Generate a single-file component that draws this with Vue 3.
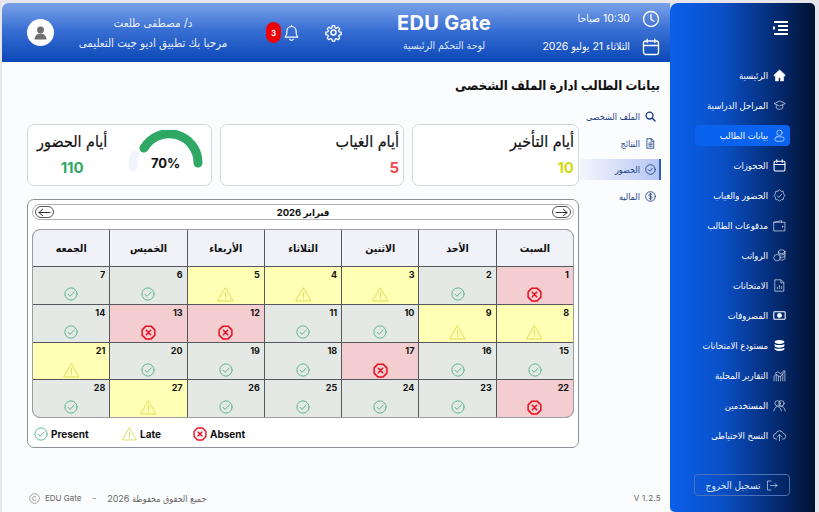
<script setup>
import { ref } from 'vue'

// sidebar entries, top to bottom
const menu = ref([
  { label: 'الرئيسية', icon: 'home' },
  { label: 'المراحل الدراسية', icon: 'cap' },
  { label: 'بيانات الطالب', icon: 'user', active: true },
  { label: 'الحجوزات', icon: 'calendar' },
  { label: 'الحضور والغياب', icon: 'shield' },
  { label: 'مدفوعات الطالب', icon: 'wallet' },
  { label: 'الرواتب', icon: 'coins' },
  { label: 'الامتحانات', icon: 'file' },
  { label: 'المصروفات', icon: 'cash' },
  { label: 'مستودع الامتحانات', icon: 'db' },
  { label: 'التقارير المحلية', icon: 'chart' },
  { label: 'المستخدمين', icon: 'users' },
  { label: 'النسخ الاحتياطى', icon: 'cloud' }
])

const tabs = ref([
  { label: 'الملف الشخصى', icon: 'search' },
  { label: 'النتائج', icon: 'doc' },
  { label: 'الحضور', icon: 'check', active: true },
  { label: 'الماليه', icon: 'dollar' }
])

const weekDays = ['السبت', 'الأحد', 'الاثنين', 'الثلاثاء', 'الأربعاء', 'الخميس', 'الجمعه']

// p = present, l = late, a = absent
const days = ref(
  'a p l l l p p l l p p a a p p p a p p p l a p p p p l p'.split(' ').map((s, i) => ({ n: i + 1, s }))
)
</script>

<template>
  <div class="page">
    <div class="main">
      <header class="top">
        <div class="avatar">
          <svg width="15" height="15" viewBox="0 0 24 24" fill="#6f6f6f"><circle cx="12" cy="8" r="5.500" /><path d="M2.500 23c0-6 4-9 9.500-9s9.500 3 9.500 9z" /></svg>
        </div>
        <div class="hello">
          <div>د/ مصطفى طلعت</div>
          <div>مرحبا بك تطبيق اديو جيت التعليمى</div>
        </div>
        <div class="notify">
          <span class="badge">3</span>
          <svg width="17" height="19" viewBox="0 0 24 24" fill="none" stroke="#fff" stroke-width="1.700" stroke-linejoin="round" stroke-linecap="round"><path d="M3 18.500h18c-1.800-1.800-2.500-3.500-2.500-6.500v-2a6.500 6.500 0 0 0-13 0v2c0 3-.7 4.700-2.500 6.500z" /><path d="M9.500 21.500c.6 1 1.500 1.500 2.500 1.500s1.900-.5 2.500-1.500M12 2v1.500" /></svg>
        </div>
        <svg class="gear" width="19" height="19" viewBox="0 0 24 24" fill="none" stroke="#fff" stroke-width="1.800" stroke-linejoin="round"><circle cx="12" cy="12" r="3.200" /><path d="M10.300 2.500h3.400l.6 2.900 1.600.7 2.500-1.600 2.400 2.400-1.600 2.500.7 1.600 2.900.6v3.400l-2.900.6-.7 1.600 1.600 2.500-2.400 2.400-2.500-1.600-1.600.7-.6 2.900h-3.400l-.6-2.900-1.600-.7-2.500 1.600-2.400-2.400 1.600-2.500-.7-1.600-2.900-.6v-3.400l2.900-.6.7-1.600-1.600-2.500 2.400-2.400 2.500 1.600 1.600-.7z" transform="translate(1.200 1.200) scale(.9)" /></svg>
        <div class="brand">
          <div class="brand-name">EDU Gate</div>
          <div class="brand-sub">لوحة التحكم الرئيسية</div>
        </div>
        <div class="when">
          <div class="when-row">
            <span>10:30 صباحا</span>
            <svg width="18" height="18" viewBox="0 0 24 24" fill="none" stroke="#fff" stroke-width="1.800" stroke-linecap="round" stroke-linejoin="round"><circle cx="12" cy="12" r="10" /><path d="M12 6v6.500l4 2.500" /></svg>
          </div>
          <div class="when-row">
            <span>الثلاثاء 21 يوليو 2026</span>
            <svg width="18" height="18" viewBox="0 0 24 24" fill="none" stroke="#fff" stroke-width="1.800" stroke-linecap="round" stroke-linejoin="round"><rect x="2" y="4" width="20" height="18" rx="3" /><path d="M2 10h20M7 1.500V6M17 1.500V6" /></svg>
          </div>
        </div>
      </header>

      <section class="content">
        <h1 class="title">بيانات الطالب ادارة الملف الشخصى</h1>

        <div class="body">
          <div class="left">
            <div class="cards">
              <div class="card card-gauge">
                <div class="stat">
                  <div class="stat-title">أيام الحضور</div>
                  <div class="stat-num green">110</div>
                </div>
                <div class="gauge">
                  <svg width="86" height="50" viewBox="0 0 86 50" fill="none" stroke-width="9" stroke-linecap="round">
                    <path d="M9 37Q9 30 11 25" stroke="#f1f5fb" />
                    <path d="M20 18A29 29 0 0 1 74 33" stroke="#2fa866" />
                  </svg>
                  <span class="gauge-num">70%</span>
                </div>
              </div>
              <div class="card">
                <div class="stat-title">أيام الغياب</div>
                <div class="stat-num red">5</div>
              </div>
              <div class="card">
                <div class="stat-title">أيام التأخير</div>
                <div class="stat-num yellow">10</div>
              </div>
            </div>

            <div class="calendar">
              <div class="month">
                <span class="arrow">
                  <svg width="13" height="9" viewBox="0 0 14 9" fill="none" stroke="#222" stroke-width="1" stroke-linecap="round" stroke-linejoin="round"><path d="M13 4.500H1M5 1L1 4.500 5 8" /></svg>
                </span>
                <span class="month-name">فبراير 2026</span>
                <span class="arrow">
                  <svg width="13" height="9" viewBox="0 0 14 9" fill="none" stroke="#222" stroke-width="1" stroke-linecap="round" stroke-linejoin="round"><path d="M1 4.500h12M9 1l4 3.500L9 8" /></svg>
                </span>
              </div>

              <div class="grid">
                <div v-for="d in weekDays" :key="d" class="head">{{ d }}</div>
                <div v-for="d in days" :key="d.n" class="day" :class="d.s">
                  <span class="num">{{ d.n }}</span>
                  <span class="mark">
                    <svg v-if="d.s === 'p'" width="14" height="14" viewBox="0 0 24 24" fill="none" stroke="#4dae8b" stroke-width="1.500" stroke-linecap="round" stroke-linejoin="round"><circle cx="12" cy="12" r="10.500" /><path d="M7 12.500l3.500 3.500L17.500 8.500" /></svg>
                    <svg v-else-if="d.s === 'l'" width="17" height="15" viewBox="0 0 24 22" fill="none" stroke="#d9d94a" stroke-width="1.300" stroke-linecap="round" stroke-linejoin="round"><path d="M12 1.500L23 20.500H1z" /><path d="M12 8v6.500M12 17v.4" /></svg>
                    <svg v-else width="15" height="15" viewBox="0 0 24 24" fill="none" stroke="#ea0f1e" stroke-width="2.400" stroke-linecap="round" stroke-linejoin="round"><path d="M7.800 1.800h8.400l6 6v8.400l-6 6H7.800l-6-6V7.800z" /><path d="M8.500 8.500l7 7M15.500 8.500l-7 7" /></svg>
                  </span>
                </div>
              </div>

              <div class="legend">
                <div class="legend-item w1">
                  <svg width="14" height="14" viewBox="0 0 24 24" fill="none" stroke="#4dae8b" stroke-width="1.500" stroke-linecap="round" stroke-linejoin="round"><circle cx="12" cy="12" r="10.500" /><path d="M7 12.500l3.500 3.500L17.500 8.500" /></svg>
                  <span>Present</span>
                </div>
                <div class="legend-item w2">
                  <svg width="15" height="14" viewBox="0 0 24 22" fill="none" stroke="#d9d94a" stroke-width="1.400" stroke-linecap="round" stroke-linejoin="round"><path d="M12 1.500L23 20.500H1z" /><path d="M12 8v6.500M12 17v.4" /></svg>
                  <span>Late</span>
                </div>
                <div class="legend-item">
                  <svg width="14" height="14" viewBox="0 0 24 24" fill="none" stroke="#ea0f1e" stroke-width="2.400" stroke-linecap="round" stroke-linejoin="round"><path d="M7.800 1.800h8.400l6 6v8.400l-6 6H7.800l-6-6V7.800z" /><path d="M8.500 8.500l7 7M15.500 8.500l-7 7" /></svg>
                  <span>Absent</span>
                </div>
              </div>
            </div>
          </div>

          <nav class="tabs">
            <div v-for="t in tabs" :key="t.label" class="tab" :class="{ on: t.active }">
              <svg width="11" height="11" viewBox="0 0 24 24" fill="none" stroke="#1d3f7e" stroke-width="1.800" stroke-linecap="round" stroke-linejoin="round">
                <template v-if="t.icon === 'search'"><circle cx="10" cy="10" r="7.500" stroke-width="3" /><path d="M16 16l6 6" stroke-width="3" /></template>
                <template v-else-if="t.icon === 'doc'"><path d="M5 1.500h9l5 5v16H5z" /><path d="M8.500 11h7M8.500 14.500h7M8.500 18h7M13.500 2v5h5" /></template>
                <template v-else-if="t.icon === 'check'"><circle cx="12" cy="12" r="10.500" /><path d="M7.500 12.500l3 3 6-6.500" /></template>
                <template v-else><circle cx="12" cy="12" r="10.500" /><path d="M15.500 8.500c-.7-1.200-2-1.800-3.500-1.800-2 0-3.500 1-3.500 2.600 0 3.600 7.200 1.700 7.200 5.400 0 1.600-1.600 2.600-3.700 2.600-1.600 0-3-.7-3.700-1.900M12 4.500v15" /></template>
              </svg>
              <span>{{ t.label }}</span>
            </div>
          </nav>
        </div>

        <footer class="foot">
          <div class="copy">
            <svg width="11" height="11" viewBox="0 0 24 24" fill="none" stroke="#777" stroke-width="1.500"><circle cx="12" cy="12" r="10.500" /><path d="M15.500 9a4.500 4.500 0 1 0 0 6" /></svg>
            <span class="copy-name">EDU Gate</span>
            <span class="copy-dash">-</span>
            <span class="ar">جميع الحقوق محفوظة 2026</span>
          </div>
          <span class="version">V 1.2.5</span>
        </footer>
      </section>
    </div>

    <aside class="side">
      <div class="burger">
        <svg width="15" height="14" viewBox="0 0 15 14" fill="#fff"><rect x="1" y="0" width="14" height="2" /><rect x="5" y="4" width="10" height="2" /><rect x="5" y="8" width="10" height="2" /><rect x="1" y="12" width="14" height="2" /><rect x="0" y="5.500" width="2" height="3" /></svg>
      </div>
      <nav class="menu">
        <div v-for="m in menu" :key="m.label" class="item" :class="{ on: m.active }">
          <svg width="13" height="13" viewBox="0 0 24 24" fill="none" stroke="#fff" stroke-width="1.100" stroke-linecap="round" stroke-linejoin="round">
            <path v-if="m.icon === 'home'" d="M12 2L2 11v2h2.500v9h5.500v-6h4v6h5.500v-9H22v-2z" fill="#fff" />
            <template v-else-if="m.icon === 'cap'"><path d="M12 4L2 8.500 12 13l10-4.500zM6 11v6c2 2.500 10 2.500 12 0v-6" /></template>
            <template v-else-if="m.icon === 'user'"><circle cx="12" cy="7" r="5" /><rect x="3.500" y="14.500" width="17" height="8" rx="4" /></template>
            <template v-else-if="m.icon === 'calendar'"><rect x="2" y="4" width="20" height="18" rx="2" stroke-width="2" /><path d="M2 10h20M7 1.500V6M17 1.500V6" stroke-width="2" /></template>
            <template v-else-if="m.icon === 'shield'"><path d="M12 1.500l3 2.500 4 .5 .5 4 2.500 3.500-2.500 3.500-.5 4-4 .5-3 2.500-3-2.500-4-.5-.5-4L2 12l2.500-3.500.5-4 4-.5z" /><path d="M8 12.500l3 3 5-6" /></template>
            <template v-else-if="m.icon === 'wallet'"><path d="M2 6h20v16H2zM2 6l14-3v3" /><path d="M18 13.500v1" stroke-width="2" /></template>
            <template v-else-if="m.icon === 'coins'"><circle cx="7.500" cy="16" r="6" /><ellipse cx="16" cy="5" rx="6" ry="3.500" /><path d="M10 5v3c0 1.500 3 3 6 3s6-1.500 6-3V5M14 15c1 .3 1.500.4 2 .4 3 0 6-1.500 6-3V8M14 20c1 .3 1.500.4 2 .4 3 0 6-1.500 6-3v-5" /></template>
            <template v-else-if="m.icon === 'file'"><path d="M4 1.500h11l5 5v16H4z" /><path d="M8 18v-3M12 18v-6M16 18v-4M14.500 2v5h5" /></template>
            <template v-else-if="m.icon === 'cash'"><rect x="1.500" y="5" width="21" height="14" rx="1.500" stroke-width="2" /><circle cx="12" cy="12" r="4" fill="#fff" /></template>
            <path v-else-if="m.icon === 'db'" d="M12 2c5.500 0 9 1.500 9 3.500S17.500 9 12 9 3 7.500 3 5.500 6.500 2 12 2zM3 9c2 1.500 5.500 2.200 9 2.200S19 10.500 21 9v3.500c0 2-3.500 3.500-9 3.500s-9-1.500-9-3.500zM3 16c2 1.500 5.500 2.200 9 2.200s7-.7 9-2.200v2.500c0 2-3.500 3.500-9 3.500s-9-1.500-9-3.500z" fill="#fff" stroke="none" />
            <template v-else-if="m.icon === 'chart'"><path d="M2 22v-9l4-3v12M10 22v-9l-4-3M14 22v-8l-4-1M18 22V9l-4 5M22 22V4l-4 5M4 8l5-3 5 4 7-7" /></template>
            <template v-else-if="m.icon === 'users'"><circle cx="8.500" cy="8" r="5" /><circle cx="15.500" cy="8" r="5" /><path d="M1.500 22c1-5 3.500-8 7-8s6 3 7 8M13 14c.8-.3 1.600-.4 2.500-.4 3.500 0 6 3.400 7 8.400" /></template>
            <template v-else><path d="M7 18.500H6a5 5 0 0 1-.5-10A7 7 0 0 1 19 8.500a5 5 0 0 1-1 10h-1" /><path d="M12 21.500V11M8 14.500l4-4 4 4" /></template>
          </svg>
          <span>{{ m.label }}</span>
        </div>
      </nav>
      <button class="logout">
        <svg width="12" height="11" viewBox="0 0 24 22" fill="none" stroke="#dbe6fa" stroke-width="1.300" stroke-linecap="round" stroke-linejoin="round"><path d="M10 2H3v18h7M9 11h13M18 7l4 4-4 4" /></svg>
        <span>تسجيل الخروج</span>
      </button>
    </aside>
  </div>
</template>

<style>
html, body {
  margin: 0;
  background: #e6e6ec;
}
</style>

<style scoped>
.page {
  display: flex;
  width: 819px;
  height: 512px;
  box-sizing: border-box;
  padding: 3px 4px 0 2px;
  overflow: hidden;
  font-family: Inter, "DejaVu Sans Condensed", "DejaVu Sans", sans-serif;
  color: #111;
}
.main {
  width: 668px;
  display: flex;
  flex-direction: column;
  background: #fbfcfe;
}
.top {
  height: 59px;
  flex: none;
  display: flex;
  align-items: center;
  padding: 0 10px 0 25px;
  color: #fff;
  background: linear-gradient(180deg, #7aa2e8 0%, #3a70d4 45%, #0a47b8 100%);
  border-radius: 6px 0 0 0;
  box-sizing: border-box;
}
.avatar {
  width: 27px;
  height: 27px;
  flex: none;
  border-radius: 50%;
  background: #fff;
  display: flex;
  align-items: center;
  justify-content: center;
  overflow: hidden;
}
.hello {
  width: 178px;
  margin-left: 10px;
  text-align: center;
  direction: rtl;
  font-size: 11.500px;
  line-height: 20px;
  color: #e8effc;
  white-space: nowrap;
}
.notify {
  display: flex;
  align-items: center;
  gap: 2px;
  margin-left: 24px;
}
.badge {
  width: 15px;
  height: 21px;
  border-radius: 8px;
  background: #f00008;
  font-size: 8px;
  font-weight: 700;
  display: flex;
  align-items: center;
  justify-content: center;
}
.gear {
  margin-left: 24px;
}
.brand {
  width: 160px;
  margin-left: 21px;
  text-align: center;
}
.brand-name {
  font-size: 20px;
  font-weight: 700;
  letter-spacing: .3px;
  line-height: 26px;
}
.brand-sub {
  font-size: 10.400px;
  line-height: 20px;
  direction: rtl;
  color: #dfe9fb;
}
.when {
  margin-left: auto;
  display: flex;
  flex-direction: column;
  gap: 10px;
  align-items: flex-end;
  font-size: 10.500px;
}
.when-row {
  display: flex;
  align-items: center;
  gap: 12px;
  direction: ltr;
}
.when-row span {
  direction: rtl;
}

.content {
  flex: 1;
  display: flex;
  flex-direction: column;
  min-height: 0;
}
.title {
  margin: 13px 10px 0 0;
  font-size: 13.200px;
  font-weight: 700;
  line-height: 20px;
  direction: rtl;
}
.body {
  display: flex;
  padding-left: 25px;
}
.left {
  width: 552px;
  padding-top: 29px;
  flex: none;
}
.cards {
  display: grid;
  grid-template-columns: 185px 184px 167px;
  gap: 8px;
}
.card {
  height: 62px;
  box-sizing: border-box;
  border: 1px solid #d4d6dc;
  border-radius: 7px;
  background: #fff;
  padding: 4px 4px;
  text-align: right;
}
.card-gauge {
  display: flex;
  justify-content: space-between;
  padding: 4px 1px 0 9px;
}
.stat {
  text-align: center;
}
.stat-title {
  font-size: 16px;
  -webkit-text-stroke: .2px #111;
  line-height: 24px;
  direction: rtl;
  white-space: nowrap;
}
.stat-num {
  font-size: 15px;
  font-weight: 700;
  line-height: 26px;
  margin-top: 2px;
}
.green { color: #2fa866; }
.red { color: #ee4a4f; }
.yellow { color: #d3d916; }
.gauge {
  position: relative;
  width: 86px;
  height: 50px;
  margin-top: 1px;
}
.gauge-num {
  position: absolute;
  left: 27px;
  top: 25px;
  font-size: 13px;
  font-weight: 700;
}
.calendar {
  margin-top: 13px;
  height: 249px;
  box-sizing: border-box;
  border: 1px solid #8f9198;
  border-radius: 7px;
  background: #fff;
  padding: 4px 4px 0 4px;
}
.month {
  height: 16px;
  box-sizing: border-box;
  border: 1px solid #aeb0b6;
  border-radius: 8px;
  display: flex;
  align-items: center;
  justify-content: space-between;
  padding: 0 2px;
}
.month-name {
  font-size: 9.500px;
  font-weight: 700;
  direction: rtl;
}
.arrow {
  width: 17px;
  height: 10px;
  border: 1px solid #555;
  border-radius: 6px;
  display: flex;
  align-items: center;
  justify-content: center;
}
.grid {
  margin-top: 9px;
  display: grid;
  direction: rtl;
  grid-template-columns: repeat(7, 1fr);
  grid-template-rows: 36px repeat(4, 36.750px);
  gap: 1px;
  background: #55585c;
  border: 1px solid #9a9ca2;
  border-radius: 8px;
  overflow: hidden;
}
.head {
  background: #f0f2f7;
  display: flex;
  align-items: center;
  justify-content: center;
  font-size: 10.500px;
  font-weight: 700;
}
.day {
  padding: 3px 4px 0;
  display: flex;
  flex-direction: column;
}
.day.p { background: #e5e9e5; }
.day.l { background: #ffffb6; }
.day.a { background: #f3cdd0; }
.num {
  font-size: 9px;
  font-weight: 700;
  line-height: 10px;
  direction: ltr;
  text-align: right;
  align-self: flex-start;
}
.mark {
  display: flex;
  justify-content: center;
  margin-top: 7px;
}
.legend {
  display: flex;
  align-items: center;
  padding: 9px 0 0 2px;
  font-size: 10px;
  font-weight: 700;
}
.legend-item {
  display: flex;
  align-items: center;
  gap: 3px;
}
.w1 { width: 88px; }
.w2 { width: 71px; }

.tabs {
  width: 81px;
  flex: none;
  margin-left: 1px;
  direction: rtl;
  display: flex;
  flex-direction: column;
  gap: 5.500px;
  margin-top: 11px;
}
.tab {
  height: 21px;
  display: flex;
  align-items: center;
  gap: 5px;
  padding-right: 5px;
  font-size: 9px;
  color: #1d3f7e;
  box-sizing: border-box;
  white-space: nowrap;
}
.tab.on {
  background: linear-gradient(270deg, #b6c6f4, #f4f6fd);
  border-right: 2px solid #2f5fb8;
  padding-right: 3px;
}

.foot {
  margin-top: auto;
  height: 28px;
  flex: none;
  box-sizing: border-box;
  padding: 0 9px 0 27px;
  display: flex;
  align-items: center;
  justify-content: space-between;
  font-size: 8px;
  color: #666;
}
.copy {
  display: flex;
  align-items: center;
  gap: 5px;
}
.copy-dash {
  margin: 0 6px;
}
.ar {
  direction: rtl;
  font-size: 9px;
}
.version {
  font-size: 8px;
  letter-spacing: .3px;
}

.side {
  width: 145px;
  flex: none;
  position: relative;
  display: flex;
  flex-direction: column;
  align-items: center;
  color: #fff;
  border-radius: 8px 5px 0 5px;
  background: linear-gradient(90deg, #0a60ea 0%, #0a50c8 35%, #04296e 75%, #011230 100%);
}
.burger {
  width: 100%;
  box-sizing: border-box;
  height: 59px;
  padding: 18px 27px 0 0;
  display: flex;
  justify-content: flex-end;
  flex: none;
}
.menu {
  width: 95px;
  margin-top: 3px;
  display: flex;
  flex-direction: column;
  align-items: stretch;
  gap: 9px;
}
.item {
  height: 21px;
  display: flex;
  align-items: center;
  direction: rtl;
  gap: 5px;
  padding-right: 4px;
  white-space: nowrap;
  font-size: 9.400px;
  border-radius: 4px;
}
.item.on {
  background: #0a63ee;
}
.logout {
  position: absolute;
  left: 24px;
  top: 471px;
  width: 96px;
  height: 22px;
  box-sizing: border-box;
  border: 1px solid #4a72b8;
  border-radius: 4px;
  background: transparent;
  color: #dbe6fa;
  font: inherit;
  font-size: 10px;
  display: flex;
  align-items: center;
  justify-content: center;
  gap: 6px;
  direction: rtl;
  padding: 0;
}
.logout svg {
  order: -1;
}
</style>
